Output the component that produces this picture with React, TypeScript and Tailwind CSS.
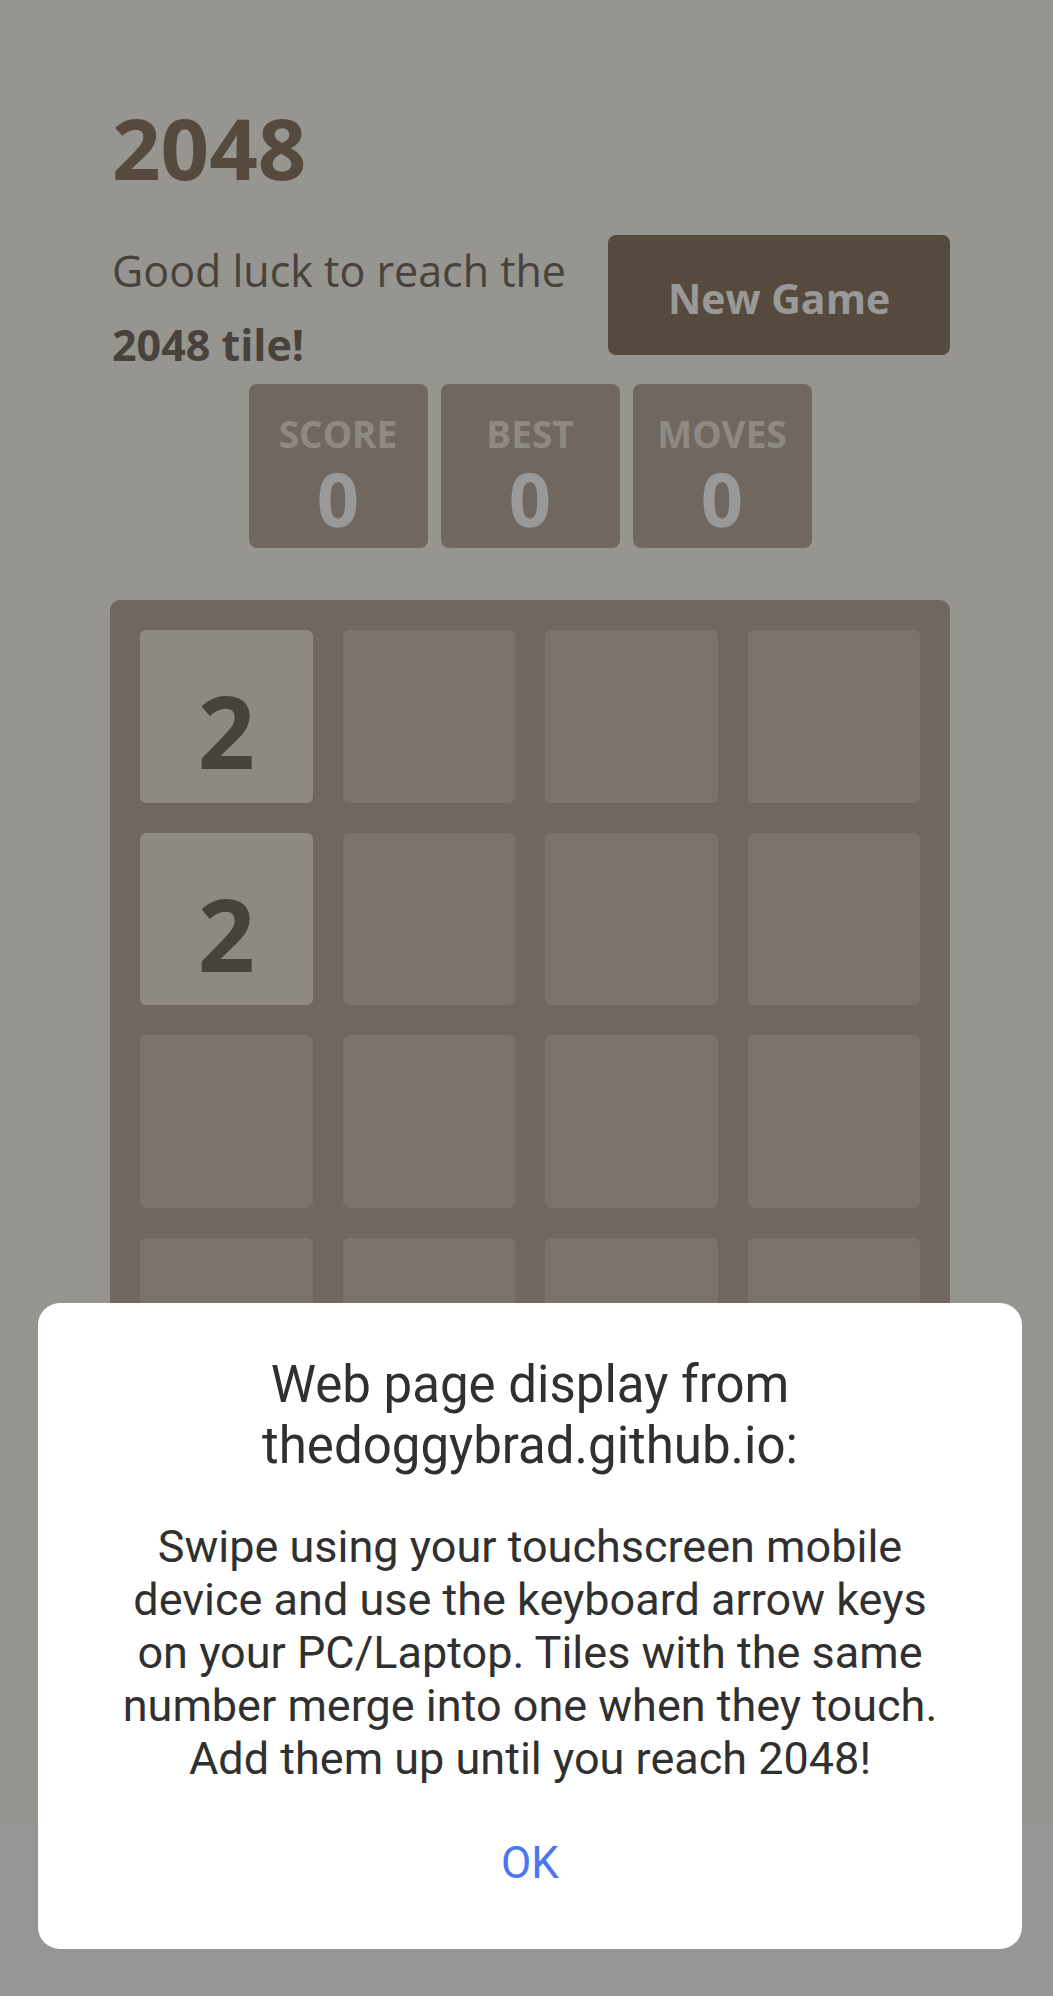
export default function App() {
  const cells = Array.from({ length: 16 }, (_, i) => (i === 0 || i === 4 ? 2 : 0));
  return (
    <div className="relative h-[1996px] w-full overflow-hidden flex flex-col">
      <div className="h-[1825px] shrink-0 bg-[#faf8ef]">
        <div className="ml-[110px] w-[840px] pt-[105px] font-['Open_Sans',sans-serif]">
          <h1 className="ml-[2px] text-[85px] leading-[84px] font-bold text-[#8f7a66]">2048</h1>
          <div className="mt-[45px] flex items-start">
            <p className="ml-[2px] flex-1 text-[43px] leading-[74px] text-[#776e65]">
              Good luck to reach the <strong className="font-bold">2048 tile!</strong>
            </p>
            <button className="mt-[1px] w-[342px] h-[120px] shrink-0 rounded-lg bg-[#8f7a66] pt-[7px] text-white text-[41px] font-bold">
              New Game
            </button>
          </div>
          <div className="mt-[2px] flex justify-center gap-[13px]">
            {["SCORE", "BEST", "MOVES"].map((l) => (
              <div
                key={l}
                className="w-[179px] h-[164px] rounded-lg bg-[#bbada0] flex flex-col items-center pt-[31px]"
              >
                <div className="text-[37px] leading-[37px] font-bold text-[#eee4da]">{l}</div>
                <div className="mt-[10px] text-[74px] leading-[74px] font-bold text-white">0</div>
              </div>
            ))}
          </div>
          <div className="mt-[52px] grid grid-cols-4 gap-[30px] p-[30px] rounded-[10px] bg-[#bbada0]">
            {cells.map((v, i) => (
              <div
                key={i}
                className={
                  v
                    ? "aspect-square rounded-md bg-[#eee4da] flex items-center justify-center pt-[28px] text-[100px] leading-[100px] font-bold text-[#776e65]"
                    : "aspect-square rounded-md bg-[rgba(238,228,218,0.35)]"
                }
              >
                {v ? v : null}
              </div>
            ))}
          </div>
        </div>
      </div>
      <div className="flex-1 bg-[#fafafa]" />

      <div className="absolute inset-0 bg-black/40" />

      <div className="absolute left-[38px] top-[1303px] w-[984px] h-[646px] rounded-[22px] bg-white font-['Roboto',sans-serif] text-center flex flex-col items-center pt-[51px]">
        <h2 className="text-[51px] leading-[61px] text-[#303030] whitespace-nowrap">
          Web page display from
          <br />
          thedoggybrad.github.io:
        </h2>
        <p className="mt-[44px] text-[45px] leading-[53px] text-[#303030] whitespace-nowrap">
          Swipe using your touchscreen mobile
          <br />
          device and use the keyboard arrow keys
          <br />
          on your PC/Laptop. Tiles with the same
          <br />
          number merge into one when they touch.
          <br />
          Add them up until you reach 2048!
        </p>
        <button className="mt-[52px] text-[44px] leading-[52px] text-[#4a76f2]">OK</button>
      </div>
    </div>
  );
}
